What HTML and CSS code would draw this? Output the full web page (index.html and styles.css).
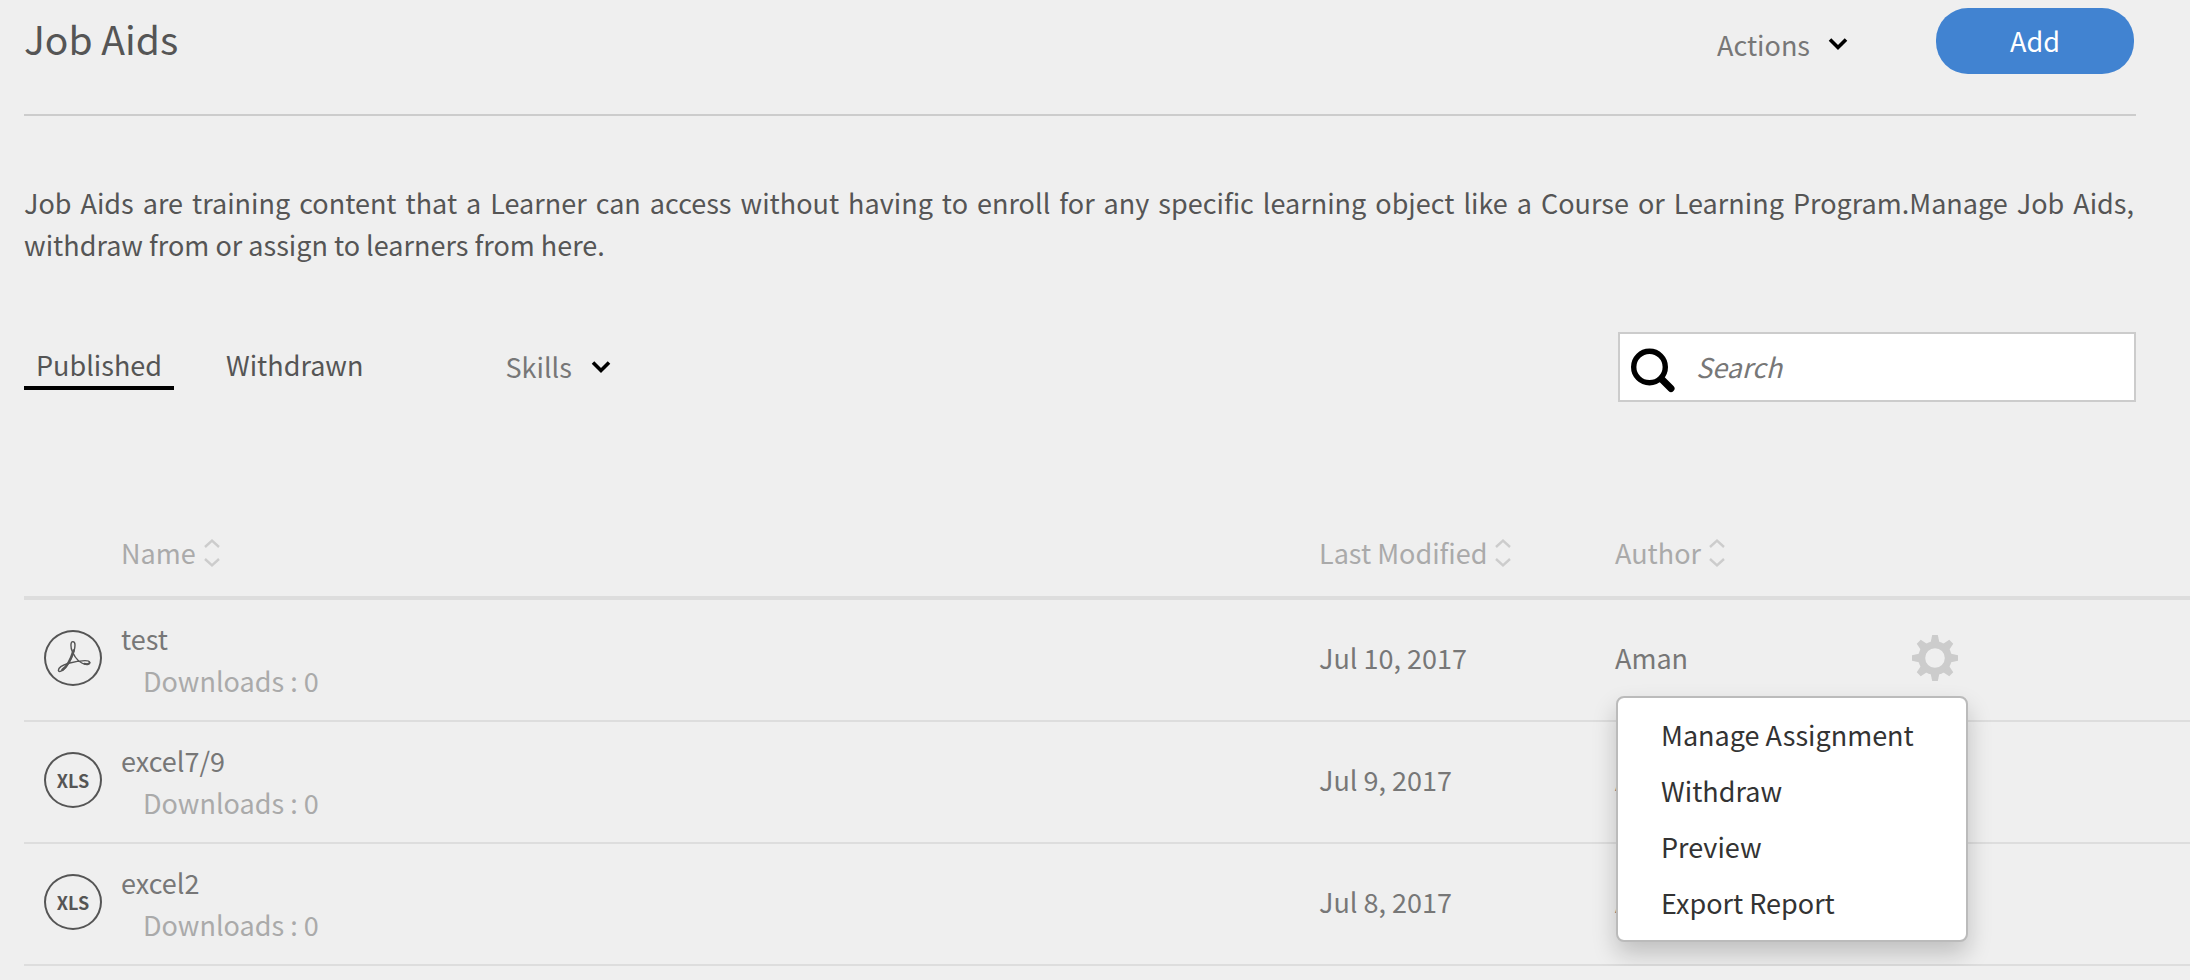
FILE: index.html
```html
<!DOCTYPE html>
<html lang="en">
<head>
<meta charset="utf-8">
<meta name="viewport" content="width=device-width, initial-scale=1">
<title>Job Aids</title>
<link rel="stylesheet" href="styles.css">
</head>
<body>
<svg class="sprite" aria-hidden="true">
  <symbol id="chevron" viewBox="0 0 20 14"><path d="M2 2.5 10 10.500 18 2.500" fill="none" stroke="#000" stroke-width="3.600"/></symbol>
  <symbol id="sort" viewBox="0 0 16 28"><path d="M1 8 8 1.700 15 8M1 20 8 26.300 15 20" fill="none" stroke="#ccc" stroke-width="2.400"/></symbol>
</svg>

<header class="page-header">
  <h1>Job Aids</h1>
  <div class="header-actions">
    <button type="button" class="menu-button" aria-haspopup="menu">Actions <svg class="chevron" aria-hidden="true"><use href="#chevron"/></svg></button>
    <button type="button" class="add-button">Add</button>
  </div>
</header>

<main>
  <p class="intro">Job Aids are training content that a Learner can access without having to enroll for any specific learning object like a Course or Learning Program.Manage Job Aids, withdraw from or assign to learners from here.</p>

  <div class="toolbar">
    <nav class="tabs" aria-label="Job aid status">
      <a href="#published" class="tab tab-active" aria-current="page">Published</a>
      <a href="#withdrawn" class="tab">Withdrawn</a>
    </nav>
    <div class="filter">
      <select aria-label="Skills filter"><option>Skills</option></select>
      <svg class="chevron" aria-hidden="true"><use href="#chevron"/></svg>
    </div>
    <label class="search">
      <svg class="search-icon" viewBox="0 0 46 46" role="img" aria-label="Search"><circle cx="19.500" cy="20" r="15.800" fill="none" stroke="#000" stroke-width="5.400"/><path d="M32 32.500 41 41.500" stroke="#000" stroke-width="7" stroke-linecap="round"/></svg>
      <input type="search" placeholder="Search">
    </label>
  </div>

  <table class="aids">
    <colgroup><col class="col-icon"><col><col class="col-date"><col class="col-author"><col class="col-menu"></colgroup>
    <thead>
      <tr>
        <th></th>
        <th scope="col"><button type="button" class="sort-button">Name<svg class="sort" aria-hidden="true"><use href="#sort"/></svg></button></th>
        <th scope="col"><button type="button" class="sort-button">Last Modified<svg class="sort" aria-hidden="true"><use href="#sort"/></svg></button></th>
        <th scope="col"><button type="button" class="sort-button">Author<svg class="sort" aria-hidden="true"><use href="#sort"/></svg></button></th>
        <th></th>
      </tr>
    </thead>
    <tbody>
      <tr>
        <td>
          <span class="badge">
            <svg class="pdf" viewBox="0 0 58 56" role="img" aria-label="PDF">
              <g fill="none" stroke="#555" stroke-linecap="round">
                <path stroke-width="1.400" d="M28.800 11.600C26.500 11.600 26.200 17 28.500 22C30.500 26.500 35.500 34.300 43 34.300C47 34.300 47 30.600 41 30.600C33 30.600 14.400 34.500 14.400 40.300C14.400 42 16.500 41.800 18.500 40.300C24 36.500 31 22.500 31 15C31 13 30.300 11.600 28.800 11.600Z"/>
                <path stroke-width="2.600" d="M18.500 39.800C23 36.500 27.500 27.500 29.600 20.500"/>
                <path stroke-width="2" d="M40.500 33.800C43.500 34.600 45.500 33.800 45.500 32.800"/>
              </g>
            </svg>
          </span>
        </td>
        <td class="name"><div>test</div><div class="downloads">Downloads : 0</div></td>
        <td>Jul 10, 2017</td>
        <td>Aman</td>
        <td class="row-menu">
          <button type="button" class="gear-button" aria-label="Settings" aria-haspopup="menu" aria-expanded="true">
            <svg class="gear" viewBox="-23 -23 46 46" aria-hidden="true">
              <circle r="13.300" fill="none" stroke="#ccc" stroke-width="7"/>
              <g fill="#ccc">
                <path id="tooth" d="M-4.500-15-2.800-23H2.800L4.500-15Z"/>
                <use href="#tooth" transform="rotate(45)"/><use href="#tooth" transform="rotate(90)"/><use href="#tooth" transform="rotate(135)"/><use href="#tooth" transform="rotate(180)"/><use href="#tooth" transform="rotate(225)"/><use href="#tooth" transform="rotate(270)"/><use href="#tooth" transform="rotate(315)"/>
              </g>
            </svg>
          </button>
          <div class="popup" role="menu">
            <button type="button" role="menuitem">Manage Assignment</button>
            <button type="button" role="menuitem">Withdraw</button>
            <button type="button" role="menuitem">Preview</button>
            <button type="button" role="menuitem">Export Report</button>
          </div>
        </td>
      </tr>
      <tr>
        <td><span class="badge">XLS</span></td>
        <td class="name"><div>excel7/9</div><div class="downloads">Downloads : 0</div></td>
        <td>Jul 9, 2017</td>
        <td>Aman</td>
        <td></td>
      </tr>
      <tr>
        <td><span class="badge">XLS</span></td>
        <td class="name"><div>excel2</div><div class="downloads">Downloads : 0</div></td>
        <td>Jul 8, 2017</td>
        <td>Aman</td>
        <td></td>
      </tr>
    </tbody>
  </table>
</main>
</body>
</html>
```

FILE: styles.css
```css
* {
  box-sizing: border-box;
}

body {
  margin: 0;
  padding-left: 24px;
  background: #efefef;
  color: #777;
  font: 27px/42px "Noto Sans CJK SC", "Noto Sans", sans-serif;
}

button,
input,
select {
  margin: 0;
  padding: 0;
  border: 0;
  background: none;
  color: inherit;
  font: inherit;
}

button {
  cursor: pointer;
}

svg {
  display: block;
}

.sprite {
  position: absolute;
  width: 0;
  height: 0;
}

.page-header {
  display: flex;
  justify-content: space-between;
  margin-right: 54px;
  padding: 8px 2px 40px 0;
  border-bottom: 2px solid #ccc;
}

h1 {
  margin: 0;
  color: #555;
  font-size: 39px;
  font-weight: 400;
  line-height: 60px;
}

.header-actions {
  display: flex;
  align-items: center;
  gap: 88px;
}

.menu-button {
  display: flex;
  align-items: center;
  gap: 18px;
  padding-top: 8px;
}

.chevron {
  width: 20px;
  height: 14px;
}

.menu-button .chevron {
  margin-bottom: 2px;
}

.add-button {
  width: 198px;
  height: 66px;
  border-radius: 32px;
  background: #4183d1;
  color: #fff;
}

.intro {
  margin: 66px 56px 66px 0;
  color: #555;
  text-align: justify;
}

.toolbar {
  display: flex;
  align-items: center;
  margin-right: 54px;
}

.tabs {
  display: flex;
  gap: 40px;
}

.tab {
  padding: 1px 12px;
  border-bottom: 4px solid transparent;
  color: #555;
  line-height: 40px;
  text-decoration: none;
}

.tab-active {
  border-color: #000;
}

.filter {
  display: flex;
  align-items: center;
  gap: 18px;
  margin-left: 130px;
}

.filter select {
  appearance: none;
}

.search {
  display: flex;
  align-items: center;
  gap: 20px;
  width: 518px;
  height: 70px;
  margin-left: auto;
  padding: 0 10px;
  border: 2px solid #ccc;
  background: #fff;
}

.search-icon {
  flex: none;
  width: 46px;
  height: 46px;
  margin-top: 6px;
}

.search input {
  flex: 1;
  min-width: 0;
  outline: 0;
}

.search input::placeholder {
  color: #777;
  font-style: italic;
}

.aids {
  width: 100%;
  margin-top: 130px;
  border-collapse: separate;
  border-spacing: 0;
  table-layout: fixed;
}

.col-icon {
  width: 97px;
}

.col-date {
  width: 296px;
}

.col-author {
  width: 297px;
}

.col-menu {
  width: 278px;
}

.aids th {
  padding: 0 0 22px;
  border-bottom: 4px solid #ddd;
  color: #aaa;
  font-weight: 400;
  text-align: left;
}

.sort-button {
  display: flex;
  align-items: center;
  gap: 8px;
}

.sort {
  width: 16px;
  height: 28px;
}

.aids td {
  height: 122px;
  padding: 0 0 4px;
  border-bottom: 2px solid #ddd;
}

.aids .name {
  padding: 0;
}

.badge {
  display: flex;
  align-items: center;
  justify-content: center;
  width: 58px;
  height: 56px;
  margin-left: 20px;
  border: 2px solid #555;
  border-radius: 50%;
  color: #555;
  font-size: 18px;
  font-weight: 700;
}

.pdf {
  flex: none;
  width: 58px;
  height: 56px;
}

.downloads {
  padding-left: 22px;
  color: #aaa;
}

.row-menu {
  position: relative;
}

.gear-button {
  display: block;
}

.gear {
  width: 46px;
  height: 46px;
}

.popup {
  position: absolute;
  top: 96px;
  right: 222px;
  display: flex;
  flex-direction: column;
  width: 352px;
  padding: 9px 0;
  border: 2px solid #bbb;
  border-radius: 8px;
  background: #fff;
  background-clip: padding-box;
  box-shadow: 0 12px 24px rgba(0, 0, 0, 0.2);
}

.popup button {
  padding-left: 43px;
  color: #333;
  line-height: 56px;
  text-align: left;
}
```
